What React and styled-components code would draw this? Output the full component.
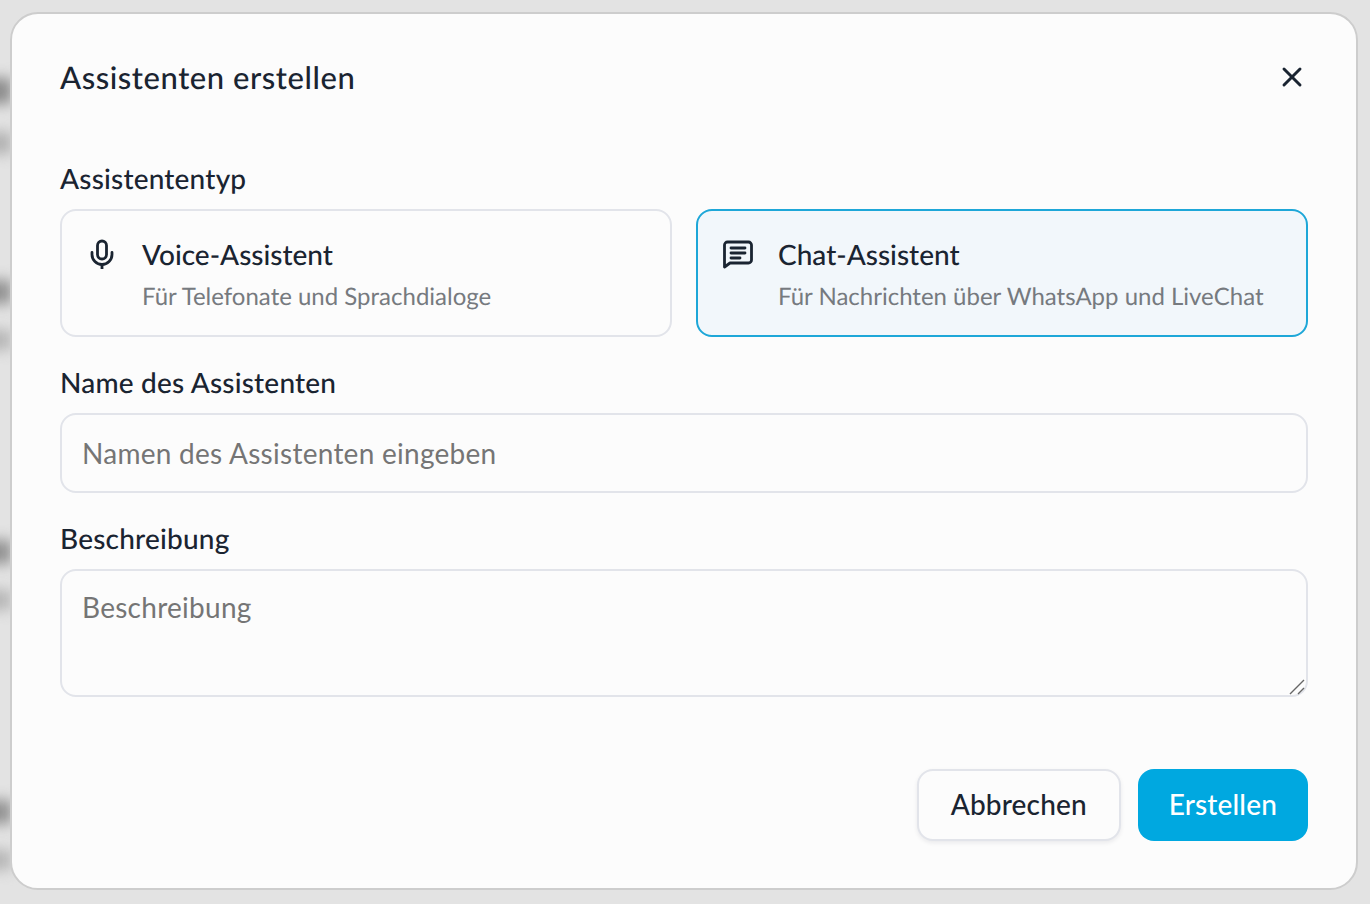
import { X } from "lucide-react";
import styled, { createGlobalStyle } from "styled-components";

const GlobalStyle = createGlobalStyle`
  html, body {
    margin: 0;
    padding: 0;
    background: #e3e3e3;
    font-family: "Lato", "Open Sans", sans-serif;
    color: #1a2431;
    text-rendering: geometricPrecision;
  }
  * {
    box-sizing: border-box;
  }
`;

const Page = styled.div`
  position: relative;
  width: 1370px;
  height: 904px;
  overflow: hidden;
  padding: 12px 12px 14px 10px;
  background: #e3e3e3;
`;

const Smudge = styled.div`
  position: absolute;
  left: -14px;
  top: ${(p) => p.$top}px;
  width: 26px;
  height: ${(p) => p.$height}px;
  background: ${(p) => p.$color};
  filter: blur(7px);
`;

const Modal = styled.div`
  position: relative;
  height: 100%;
  display: flex;
  flex-direction: column;
  padding: 0 48px 47px 48px;
  background: #fcfcfc;
  border: 2px solid #cdcdcd;
  border-radius: 28px;
`;

const Header = styled.div`
  display: flex;
  align-items: center;
  justify-content: space-between;
  height: 147px;
  padding-bottom: 22px;
`;

const Title = styled.h2`
  margin: 0;
  font-size: 31px;
  font-weight: 500;
  line-height: 40px;
  letter-spacing: 0.55px;
`;

const CloseButton = styled.button`
  display: flex;
  padding: 0;
  border: none;
  background: none;
  color: #1a2431;
`;

const Label = styled.label`
  display: block;
  font-size: 28px;
  font-weight: 500;
  line-height: 34px;
  letter-spacing: 0.2px;
`;

const TypeGrid = styled.div`
  display: grid;
  grid-template-columns: 1fr 1fr;
  gap: 24px;
  margin-top: 14px;
  margin-bottom: 28px;
`;

const TypeCard = styled.div`
  display: flex;
  height: 128px;
  padding: 24px 25px;
  gap: 25px;
  border-radius: 16px;
  border: 2px solid ${(p) => (p.$active ? "#1ea7d8" : "#e2e4ea")};
  background: ${(p) => (p.$active ? "#f2f7fb" : "#fcfcfc")};
`;

const IconBox = styled.div`
  flex: none;
  width: 30px;
  height: 30px;
  margin-top: 4px;
`;

const TypeText = styled.div`
  display: flex;
  flex-direction: column;
  gap: 7px;
`;

const TypeTitle = styled.div`
  font-size: 28px;
  font-weight: 500;
  line-height: 38px;
`;

const TypeHint = styled.div`
  font-size: 24px;
  line-height: 34px;
  color: #767a7f;
`;

const Input = styled.input`
  display: block;
  width: 100%;
  height: 80px;
  margin-top: 14px;
  margin-bottom: 28px;
  padding: 0 20px;
  font: inherit;
  font-size: 28px;
  letter-spacing: 0.27px;
  color: #1a2431;
  background: #fcfcfc;
  border: 2px solid #e2e4ea;
  border-radius: 16px;
  outline: none;

  &::placeholder {
    color: #757575;
    opacity: 1;
  }
`;

const TextAreaWrap = styled.div`
  position: relative;
  margin-top: 14px;
`;

const TextArea = styled.textarea`
  display: block;
  width: 100%;
  height: 128px;
  padding: 18px 20px;
  font: inherit;
  font-size: 28px;
  letter-spacing: 0.27px;
  line-height: 36px;
  background: #fcfcfc;
  border: 2px solid #e2e4ea;
  border-radius: 16px;
  outline: none;
  resize: none;

  &::placeholder {
    color: #757575;
    opacity: 1;
  }
`;

const Grip = styled.svg`
  position: absolute;
  right: 2px;
  bottom: 2px;
  width: 18px;
  height: 18px;
  pointer-events: none;
`;

const Footer = styled.div`
  display: flex;
  justify-content: flex-end;
  gap: 17px;
  margin-top: auto;
`;

const Button = styled.button`
  height: 72px;
  padding: 0 ${(p) => (p.$primary ? "31px" : "32px")} 2px;
  font: inherit;
  font-size: 28px;
  font-weight: 500;
  letter-spacing: 0.15px;
  border-radius: 16px;
  color: ${(p) => (p.$primary ? "#fff" : "#1a2431")};
  background: ${(p) => (p.$primary ? "#00a8e0" : "#fcfcfc")};
  border: ${(p) => (p.$primary ? "none" : "2px solid #e2e4ea")};
  box-shadow: ${(p) => (p.$primary ? "none" : "0 2px 4px rgba(20, 30, 50, 0.08)")};
`;

const MicIcon = () => (
  <svg width="30" height="30" viewBox="0 0 30 30" fill="none" stroke="currentColor" strokeWidth="2.8" strokeLinecap="round" strokeLinejoin="round">
    <rect x="10.5" y="2" width="9" height="18" rx="4.5" />
    <path d="M5 13.5v2a10 10 0 0 0 20 0v-2" />
    <path d="M15 25.5v4.5" />
  </svg>
);

const ChatIcon = () => (
  <svg width="30" height="30" viewBox="0 -1 30 30" fill="none" stroke="currentColor" strokeWidth="2.8" strokeLinecap="round" strokeLinejoin="round">
    <path d="M1.5 27V5a3 3 0 0 1 3-3h21a3 3 0 0 1 3 3v15a3 3 0 0 1-3 3H7z" />
    <path d="M8 8h14M8 13h14M8 18h9" />
  </svg>
);

export default function App() {
  return (
    <>
      <GlobalStyle />
      <Page>
        <Smudge $top={78} $height={26} $color="#8a8a8a" />
        <Smudge $top={132} $height={22} $color="#b0b0b0" />
        <Smudge $top={280} $height={24} $color="#8f8f8f" />
        <Smudge $top={330} $height={20} $color="#b4b4b4" />
        <Smudge $top={540} $height={24} $color="#8f8f8f" />
        <Smudge $top={590} $height={20} $color="#b4b4b4" />
        <Smudge $top={800} $height={24} $color="#8f8f8f" />
        <Smudge $top={850} $height={20} $color="#b4b4b4" />
        <Modal>
          <Header>
            <Title>Assistenten erstellen</Title>
            <CloseButton aria-label="Schließen">
              <X size={32} strokeWidth={2.2} />
            </CloseButton>
          </Header>

          <Label>Assistententyp</Label>
          <TypeGrid>
            <TypeCard>
              <IconBox>
                <MicIcon />
              </IconBox>
              <TypeText>
                <TypeTitle>Voice-Assistent</TypeTitle>
                <TypeHint>Für Telefonate und Sprachdialoge</TypeHint>
              </TypeText>
            </TypeCard>
            <TypeCard $active>
              <IconBox>
                <ChatIcon />
              </IconBox>
              <TypeText>
                <TypeTitle>Chat-Assistent</TypeTitle>
                <TypeHint>Für Nachrichten über WhatsApp und LiveChat</TypeHint>
              </TypeText>
            </TypeCard>
          </TypeGrid>

          <Label>Name des Assistenten</Label>
          <Input placeholder="Namen des Assistenten eingeben" />

          <Label>Beschreibung</Label>
          <TextAreaWrap>
            <TextArea placeholder="Beschreibung" />
            <Grip viewBox="0 0 18 18" fill="none" stroke="#666" strokeWidth="1.4">
              <path d="M2 17L16 3M10 17l6-6" />
            </Grip>
          </TextAreaWrap>

          <Footer>
            <Button>Abbrechen</Button>
            <Button $primary>Erstellen</Button>
          </Footer>
        </Modal>
      </Page>
    </>
  );
}
